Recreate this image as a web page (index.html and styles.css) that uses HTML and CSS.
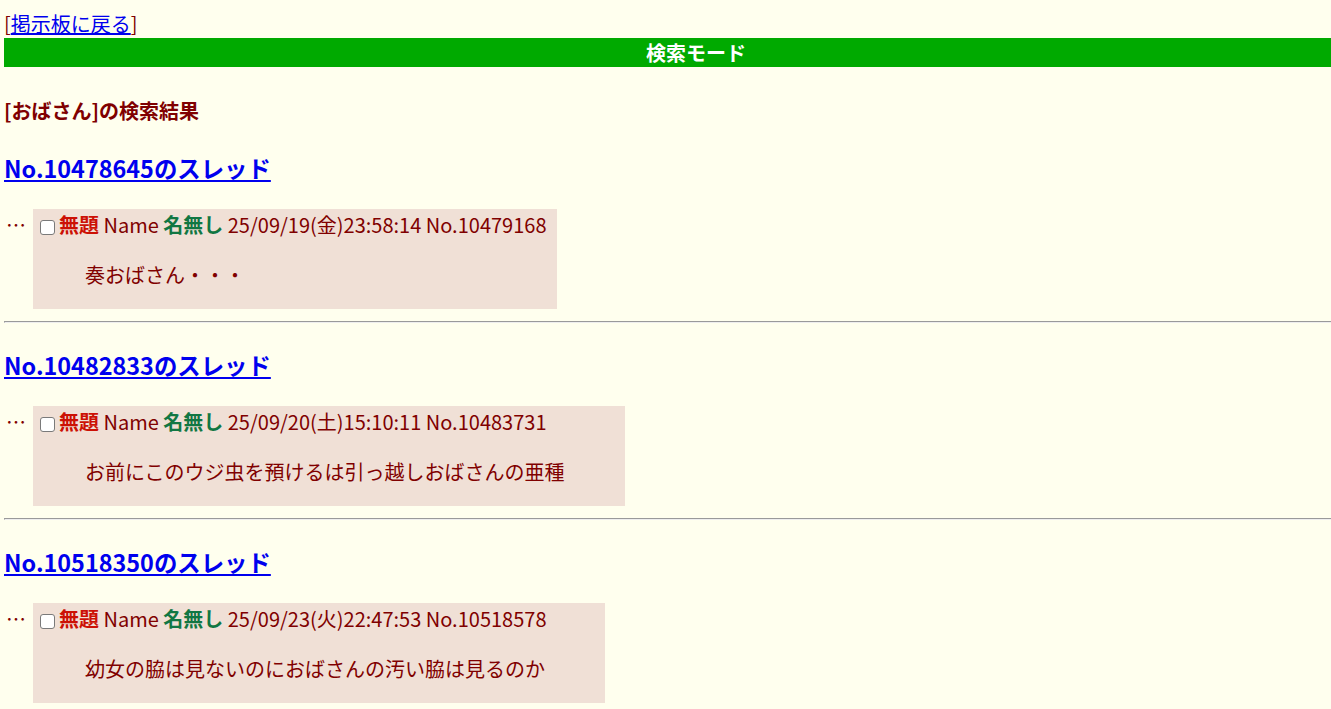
FILE: index.html
```html
<!DOCTYPE html>
<html lang="ja">
<head>
<meta charset="utf-8">
<title>検索モード</title>
<link rel="stylesheet" href="styles.css">
</head>
<body>
<div class="page">
  <div class="back">[<a href="#">掲示板に戻る</a>]</div>
  <div class="mode-bar">検索モード</div>
  <h4 class="result-title">[おばさん]の検索結果</h4>

  <section class="thread">
    <h3 class="thread-title"><a href="#">No.10478645のスレッド</a></h3>
    <div class="post-row">
      <div class="rts">…</div>
      <div class="rtd">
        <div class="post-head"><input type="checkbox" class="del"><span class="csb">無題</span> Name <span class="cnm">名無し</span> 25/09/19(金)23:58:14 No.10479168</div>
        <blockquote class="post-body">奏おばさん・・・</blockquote>
      </div>
    </div>
    <hr class="sep">
  </section>

  <section class="thread">
    <h3 class="thread-title"><a href="#">No.10482833のスレッド</a></h3>
    <div class="post-row">
      <div class="rts">…</div>
      <div class="rtd">
        <div class="post-head"><input type="checkbox" class="del"><span class="csb">無題</span> Name <span class="cnm">名無し</span> 25/09/20(土)15:10:11 No.10483731</div>
        <blockquote class="post-body">お前にこのウジ虫を預けるは引っ越しおばさんの亜種</blockquote>
      </div>
    </div>
    <hr class="sep">
  </section>

  <section class="thread">
    <h3 class="thread-title"><a href="#">No.10518350のスレッド</a></h3>
    <div class="post-row">
      <div class="rts">…</div>
      <div class="rtd">
        <div class="post-head"><input type="checkbox" class="del"><span class="csb">無題</span> Name <span class="cnm">名無し</span> 25/09/23(火)22:47:53 No.10518578</div>
        <blockquote class="post-body">幼女の脇は見ないのにおばさんの汚い脇は見るのか</blockquote>
      </div>
    </div>
    <hr class="sep">
  </section>
</div>
</body>
</html>
```

FILE: styles.css
```css
html {
  overflow: hidden;
}

body {
  margin: 0;
  background: #ffffee;
  color: #800000;
  font-family: "Noto Sans CJK JP", "Noto Sans", sans-serif;
  font-size: 20px;
  line-height: 29px;
}

a {
  color: #0000ee;
  text-decoration: underline;
}

.page {
  width: 1384px;
  padding: 9px 0 0 4px;
}

.back {
  line-height: 29px;
}

.mode-bar {
  background: #00aa00;
  color: #ffffff;
  font-weight: bold;
  text-align: center;
  height: 29px;
  line-height: 29px;
}

.result-title {
  font-size: 20px;
  font-weight: bold;
  line-height: 29px;
  margin: 29px 0 0;
}

.thread-title {
  font-size: 23.4px;
  font-weight: bold;
  line-height: 34px;
  margin: 26px 0 24px;
}

.post-row {
  display: flex;
  align-items: flex-start;
}

.rts {
  width: 27px;
  padding-left: 2px;
  padding-top: 1px;
  line-height: 30px;
}

.rtd {
  background: #f0e0d6;
  padding: 0 11px 0 3px;
}

.post-head {
  padding-top: 1px;
  line-height: 30px;
  white-space: nowrap;
}

.del {
  appearance: none;
  -webkit-appearance: none;
  box-sizing: border-box;
  width: 15px;
  height: 15px;
  margin: 0 4px 0 4px;
  border: 1.5px solid #7a7a7a;
  border-radius: 3px;
  background: #ffffff;
  vertical-align: -2px;
}

.csb {
  color: #cc1105;
  font-weight: bold;
}

.cnm {
  color: #117743;
  font-weight: bold;
}

.post-body {
  margin: 20px 49px 20px 49px;
  line-height: 29px;
}

.sep {
  margin: 12px 0 -1px;
  border: 1px inset;
  color: gray;
}
```
